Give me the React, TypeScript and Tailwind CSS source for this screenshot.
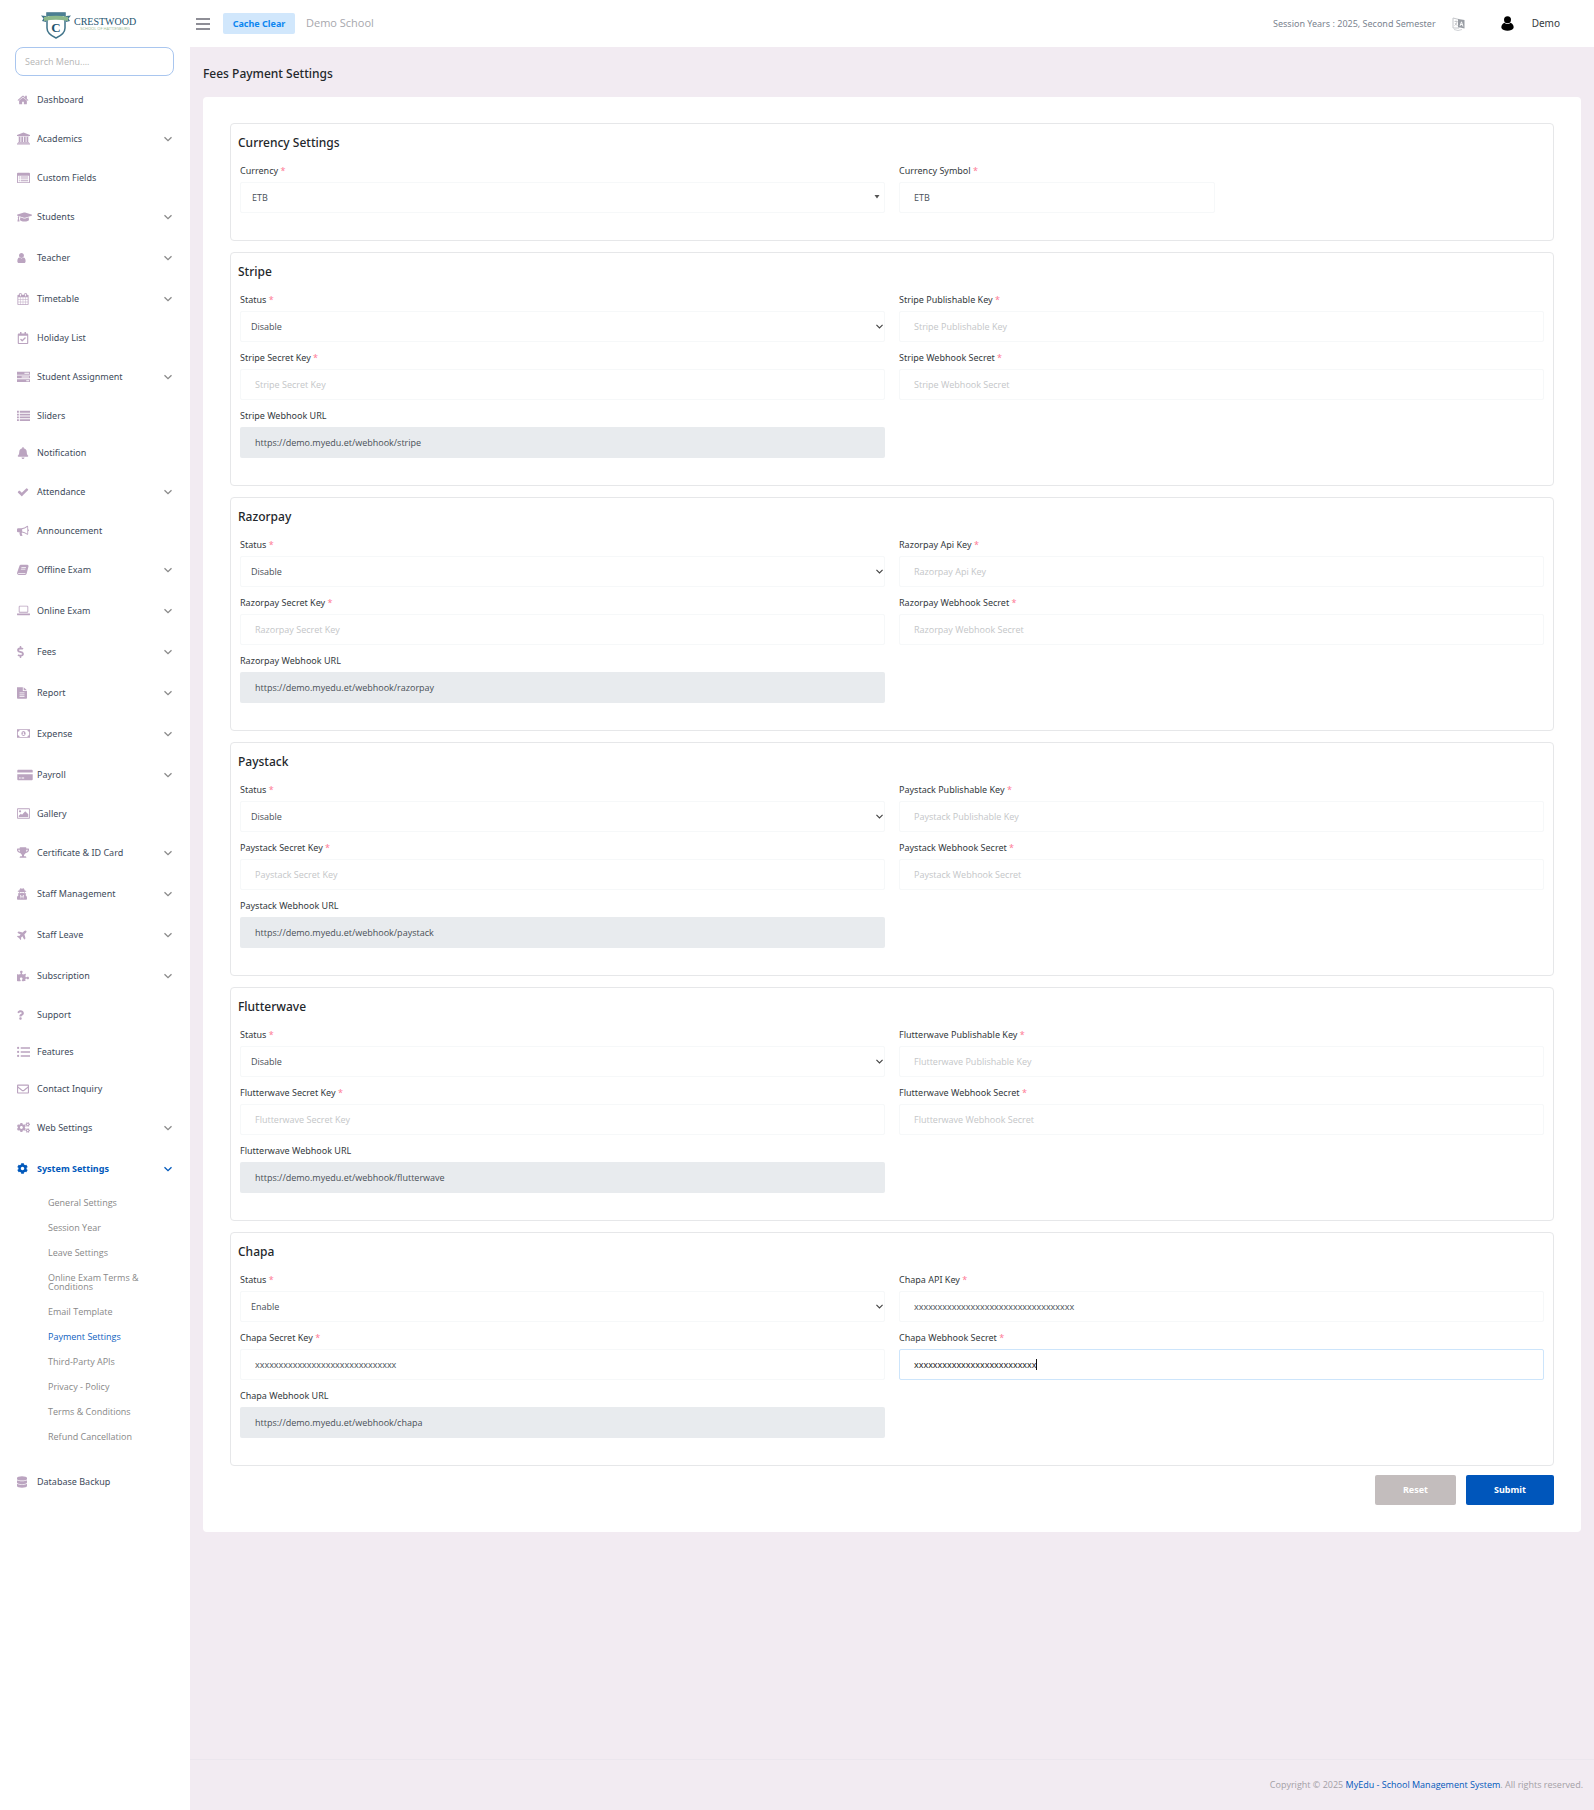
import type { ReactNode } from "react";
import {
  FaBell,
  FaCog,
  FaCogs,
  FaDatabase,
  FaDollarSign,
  FaGraduationCap,
  FaPlane,
  FaPuzzlePiece,
  FaQuestion,
  FaRegCalendarCheck,
  FaRegEnvelope,
  FaTrophy,
  FaUserSecret,
} from "react-icons/fa";

type MenuItem = {
  label: string;
  icon: ReactNode;
  arrow?: boolean;
  active?: boolean;
};

type FieldProps = {
  id: string;
  label: string;
  required?: boolean;
  children: ReactNode;
};

type Gateway = {
  name: string;
  keyLabel: string;
  status: string;
  keyValue?: string;
  secretValue?: string;
  webhookValue?: string;
};

function Glyph({ d, box = "0 0 1792 1792", className = "h-[13px] w-[13px]" }: { d: string; box?: string; className?: string }) {
  return (
    <svg viewBox={box} className={className} fill="currentColor" fillRule="evenodd" aria-hidden="true">
      <path d={d} />
    </svg>
  );
}

const paths = {
  home: "M1472 992v480q0 26-19 45t-45 19h-384v-384h-256v384h-384q-26 0-45-19t-19-45v-480q0-1 .5-3t.5-3l575-474 575 474q1 2 1 6zm223-69l-62 74q-8 9-21 11h-3q-13 0-21-7l-692-577-692 577q-12 8-24 7-13-2-21-11l-62-74q-8-10-7-23.5t11-21.5l719-599q32-26 76-26t76 26l244 204v-195q0-14 9-23t23-9h192q14 0 23 9t9 23v408l219 182q10 8 11 21.5t-7 23.5z",
  university:
    "M832 64l960 384v128h-128q0 26-20.5 45t-48.5 19h-1526q-28 0-48.5-19t-20.5-45h-128v-128zm-704 640h256v768h128v-768h256v768h128v-768h256v768h128v-768h256v768h59q28 0 48.5 19t20.5 45v64h-1664v-64q0-26 20.5-45t48.5-19h59v-768zm1595 960q28 0 48.5 19t20.5 45v128h-1920v-128q0-26 20.5-45t48.5-19h1782z",
  user: "M1536 1399q0 109-62.5 187t-150.5 78h-854q-88 0-150.5-78t-62.5-187q0-85 8.5-160.5t31.5-152 58.5-131 94-89 134.5-34.5q131 128 313 128t313-128q76 0 134.5 34.5t94 89 58.5 131 31.5 152 8.5 160.5zm-256-887q0 159-112.5 271.5t-271.5 112.5-271.5-112.5-112.5-271.5 112.5-271.5 271.5-112.5 271.5 112.5 112.5 271.5z",
  calendar:
    "M192 1664h288v-288h-288v288zm352 0h320v-288h-320v288zm-352-352h288v-320h-288v320zm352 0h320v-320h-320v320zm-352-384h288v-288h-288v288zm736 736h320v-288h-320v288zm-384-736h320v-288h-320v288zm768 736h288v-288h-288v288zm-384-352h320v-320h-320v320zm-352-864v-288q0-13-9.5-22.5t-22.5-9.5h-64q-13 0-22.5 9.5t-9.5 22.5v288q0 13 9.5 22.5t22.5 9.5h64q13 0 22.5-9.5t9.5-22.5zm736 864h288v-320h-288v320zm-384-384h320v-288h-320v288zm384 0h288v-288h-288v288zm32-480v-288q0-13-9.5-22.5t-22.5-9.5h-64q-13 0-22.5 9.5t-9.5 22.5v288q0 13 9.5 22.5t22.5 9.5h64q13 0 22.5-9.5t9.5-22.5zm384-64v1280q0 52-38 90t-90 38h-1408q-52 0-90-38t-38-90v-1280q0-52 38-90t90-38h128v-96q0-66 47-113t113-47h64q66 0 113 47t47 113v96h384v-96q0-66 47-113t113-47h64q66 0 113 47t47 113v96h128q52 0 90 38t38 90z",
  check:
    "M1671 566q0 40-28 68l-724 724-136 136q-28 28-68 28t-68-28l-136-136-362-362q-28-28-28-68t28-68l136-136q28-28 68-28t68 28l294 295 656-657q28-28 68-28t68 28l136 136q28 28 28 68z",
  listAlt:
    "M1 2h12q1 0 1 1v9q0 1-1 1H1q-1 0-1-1V3q0-1 1-1zM1 5v7h12V5zM2 6h1v1H2zM4 6h8v1H4zM2 8h1v1H2zM4 8h8v1H4zM2 10h1v1H2zM4 10h8v1H4z",
  tasks:
    "M0 2h14v3H0zM8 3v1h5V3zM0 6h14v3H0zM5 7v1h8V7zM0 10h14v3H0zM10 11v1h3v-1z",
  list: "M0 2h2v2H0zM3 2h11v2H3zM0 5h2v2H0zM3 5h11v2H3zM0 8h2v2H0zM3 8h11v2H3zM0 11h2v2H0zM3 11h11v2H3z",
  listUl:
    "M1.2 2a1.2 1.2 0 1 1 0 2.4a1.2 1.2 0 0 1 0-2.4zM4 2.5h10v1.5H4zM1.2 6.3a1.2 1.2 0 1 1 0 2.4a1.2 1.2 0 0 1 0-2.4zM4 6.8h10v1.5H4zM1.2 10.6a1.2 1.2 0 1 1 0 2.4a1.2 1.2 0 0 1 0-2.4zM4 11.1h10v1.5H4z",
  bullhorn:
    "M12 1q1 0 1 1v3q1 .3 1 1.200t-1 1.200V10.500q0 1-1 1Q9 9 5.800 8.700Q5 9.500 5.700 10.200Q5.300 11 6.600 12Q5.800 13.300 3.700 12.600Q2.500 10 3 8.600H1.300Q0 8.600 0 7.300V5.200Q0 3.900 1.300 3.900H5Q9 3.900 12 1zM12 2.300Q9 4.700 6 4.900V7.700Q9 8 12 10.200z",
  book: "M4.500 1H12.200q1.600.3 1.200 2L11.200 11.500q-.4 1.300-1.600 1.300H2q-1.400 0-1.800-1.300-.3-1 .1-1.800L2.700 2.500Q3.200 1 4.500 1zM5.300 3.500L5 4.300h5.300l.3-.8zM4.700 5.500l-.3.8h5.300l.3-.8zM1.500 10.500q-.3 1 .6 1.300h7.500l.4-1H2z",
  laptop:
    "M3.200 2h8.600q1.200 0 1.200 1.200v5.600q0 1.200-1.200 1.200H3.200Q2 10 2 8.800V3.200Q2 2 3.200 2zM3 3v6h9V3zM0 11h15v1q0 1-1.200 1H1.200Q0 13 0 12z",
  file: "M0 0h7v4.500h5V13q0 1-1 1H1q-1 0-1-1zM8 0l4 3.600H8zM3 6.500v.9h6v-.9zM3 8.700v.9h6v-.9zM3 10.900v.9h6v-.9z",
  money:
    "M0 2h15v10H0zM3 3q0 2-2 2v4q2 0 2 2h9q0-2 2-2V5q-2 0-2-2zM7.500 4q2.500.3 2.500 3t-2.500 3Q5 9.700 5 7t2.500-3zM7 5.500L6.300 6v.6H7V8h-.7v.7h2.400V8H8V5.500z",
  card: "M0 2q0-1 1-1h16q1 0 1 1v2H0zM0 6h18v6q0 1-1 1H1q-1 0-1-1zM2 10v1h2v-1zM5 10v1h3v-1z",
  image:
    "M1 1h13q1 0 1 1v10q0 1-1 1H1q-1 0-1-1V2q0-1 1-1zM1 2v10h13V2zM3.500 3.200a1.300 1.300 0 1 1 0 2.600a1.300 1.300 0 0 1 0-2.600zM2 9.500l2.500-2.200 1.300 1.200L9.500 4.500l3.500 3.500v3H2z",
};

const small = "0 0 14 14";

const menu: MenuItem[] = [
  { label: "Dashboard", icon: <Glyph d={paths.home} className="h-3 w-3" /> },
  { label: "Academics", icon: <Glyph d={paths.university} box="-128 0 1920 1920" />, arrow: true },
  { label: "Custom Fields", icon: <Glyph d={paths.listAlt} box={small} /> },
  { label: "Students", icon: <FaGraduationCap className="h-3 w-[15px]" />, arrow: true },
  { label: "Teacher", icon: <Glyph d={paths.user} box="200 0 1400 1792" className="h-3 w-[9px]" />, arrow: true },
  { label: "Timetable", icon: <Glyph d={paths.calendar} className="h-3 w-3" />, arrow: true },
  { label: "Holiday List", icon: <FaRegCalendarCheck className="h-3 w-3" /> },
  { label: "Student Assignment", icon: <Glyph d={paths.tasks} box={small} />, arrow: true },
  { label: "Sliders", icon: <Glyph d={paths.list} box={small} /> },
  { label: "Notification", icon: <FaBell className="h-3 w-3" /> },
  { label: "Attendance", icon: <Glyph d={paths.check} className="h-3 w-3" />, arrow: true },
  { label: "Announcement", icon: <Glyph d={paths.bullhorn} box={small} className="h-3 w-3" /> },
  { label: "Offline Exam", icon: <Glyph d={paths.book} box={small} className="h-3 w-3" />, arrow: true },
  { label: "Online Exam", icon: <Glyph d={paths.laptop} box="0 0 15 15" />, arrow: true },
  { label: "Fees", icon: <FaDollarSign className="h-3 w-[7px]" />, arrow: true },
  { label: "Report", icon: <Glyph d={paths.file} box="0 0 12 14" className="h-3 w-[10px]" />, arrow: true },
  { label: "Expense", icon: <Glyph d={paths.money} box="0 0 15 14" />, arrow: true },
  { label: "Payroll", icon: <Glyph d={paths.card} box="0 0 18 14" className="h-3 w-4" />, arrow: true },
  { label: "Gallery", icon: <Glyph d={paths.image} box="0 0 15 14" /> },
  { label: "Certificate & ID Card", icon: <FaTrophy className="h-[11px] w-3" />, arrow: true },
  { label: "Staff Management", icon: <FaUserSecret className="h-3 w-[10px]" />, arrow: true },
  { label: "Staff Leave", icon: <FaPlane className="h-[11px] w-[11px] -rotate-45" />, arrow: true },
  { label: "Subscription", icon: <FaPuzzlePiece className="h-3 w-3" />, arrow: true },
  { label: "Support", icon: <FaQuestion className="h-[10px] w-[7px]" /> },
  { label: "Features", icon: <Glyph d={paths.listUl} box={small} /> },
  { label: "Contact Inquiry", icon: <FaRegEnvelope className="h-3 w-3" /> },
  { label: "Web Settings", icon: <FaCogs className="h-[13px] w-[13px]" />, arrow: true },
  { label: "System Settings", icon: <FaCog className="h-[11px] w-[11px]" />, arrow: true, active: true },
];

const subMenu = [
  "General Settings",
  "Session Year",
  "Leave Settings",
  "Online Exam Terms & Conditions",
  "Email Template",
  "Payment Settings",
  "Third-Party APIs",
  "Privacy - Policy",
  "Terms & Conditions",
  "Refund Cancellation",
];

const gateways: Gateway[] = [
  { name: "Stripe", keyLabel: "Publishable Key", status: "Disable" },
  { name: "Razorpay", keyLabel: "Api Key", status: "Disable" },
  { name: "Paystack", keyLabel: "Publishable Key", status: "Disable" },
  { name: "Flutterwave", keyLabel: "Publishable Key", status: "Disable" },
  {
    name: "Chapa",
    keyLabel: "API Key",
    status: "Enable",
    keyValue: "xxxxxxxxxxxxxxxxxxxxxxxxxxxxxxxxxx",
    secretValue: "xxxxxxxxxxxxxxxxxxxxxxxxxxxxxx",
    webhookValue: "xxxxxxxxxxxxxxxxxxxxxxxxxx",
  },
];

function Chevron({ className }: { className: string }) {
  return (
    <svg viewBox="0 0 8 8" className={className} fill="none" stroke="currentColor" strokeWidth="1.3" aria-hidden="true">
      <path d="M0.500 2.200L4 5.700L7.500 2.200" />
    </svg>
  );
}

function Logo() {
  return (
    <a href="#" className="ml-[41px] flex h-[47px] items-center">
      <svg viewBox="0 0 30 27" className="mt-1 h-[27px] w-[30px]" aria-hidden="true">
        <path d="M6 1H24V16Q24 22 15 26Q6 22 6 16Z" fill="#fff" stroke="#3f7389" strokeWidth="1.500" />
        <path d="M6 1H24V4H6Z" fill="#4b7f93" />
        <path d="M0 3.500L5 4V10L1 9L2.500 6.500ZM30 3.500L25 4V10L29 9L27.500 6.500Z" fill="#3f7389" />
        <path d="M3 5Q15 2.500 27 5V9Q15 6.500 3 9Z" fill="#8db98c" />
        <text x="15" y="20" textAnchor="middle" fontFamily="Liberation Serif, serif" fontSize="13" fontWeight="700" fill="#1d5470">
          C
        </text>
      </svg>
      <span className="ml-[3px] flex flex-col items-center font-['Liberation_Serif',serif]">
        <span className="text-[10px] leading-[10px] text-[#1d5470]">CRESTWOOD</span>
        <span className="font-['Noto_Sans',sans-serif] text-[4px] leading-[4px] text-[#a5c29a]">SCHOOL OF HATTIESBURG</span>
      </span>
    </a>
  );
}

function SidebarItem({ label, icon, arrow, active }: MenuItem) {
  return (
    <li>
      <a
        href="#"
        className={`flex items-center pr-[18px] pl-[17px] ${arrow ? "h-[41px]" : "h-[37px]"} ${
          active ? "font-bold text-[#0058bb]" : "text-[#3e4b5b]"
        }`}
      >
        <span className={`flex w-5 shrink-0 items-center ${active ? "" : "text-[#bba4c0]"}`}>{icon}</span>
        <span className="flex-1">{label}</span>
        {arrow && <Chevron className={`h-2 w-2 ${active ? "text-[#0058bb]" : "text-[#8a8a8a]"}`} />}
      </a>
    </li>
  );
}

function Sidebar() {
  return (
    <aside className="w-[190px] shrink-0 bg-white text-[9px]">
      <Logo />
      <div className="pr-4 pl-[15px]">
        <input
          type="search"
          aria-label="Search Menu"
          placeholder="Search Menu...."
          className="h-[29px] w-full rounded-lg border border-[#a9c6ef] px-[9px] font-['Open_Sans',sans-serif] outline-none placeholder:text-[#b5b5b5]"
        />
      </div>
      <nav className="mt-[5px]">
        <ul>
          {menu.map((item) => (
            <SidebarItem key={item.label} {...item} />
          ))}
        </ul>
        <ul className="mt-px mb-[14px] pr-10 pl-12 font-['Open_Sans',sans-serif]">
          {subMenu.map((item) => (
            <li key={item}>
              <a
                href="#"
                className={`block py-2 leading-[9px] ${item === "Payment Settings" ? "font-medium text-[#0f62bf]" : "text-[#888]"}`}
              >
                {item}
              </a>
            </li>
          ))}
        </ul>
        <ul>
          <SidebarItem label="Database Backup" icon={<FaDatabase className="h-3 w-[10px]" />} />
        </ul>
      </nav>
    </aside>
  );
}

function Header() {
  return (
    <header className="flex h-[47px] items-center bg-white pr-[34px] pl-[6px]">
      <button type="button" aria-label="Toggle menu" className="flex w-[14px] flex-col gap-[3px]">
        <span className="h-[2px] bg-[#8e8e96]" />
        <span className="h-[2px] bg-[#8e8e96]" />
        <span className="h-[2px] bg-[#8e8e96]" />
      </button>
      <button type="button" className="ml-[13px] h-[21px] w-[72px] rounded-xs bg-[#d1e7fc] text-[9px] font-bold text-[#0d86f0]">
        Cache Clear
      </button>
      <span className="ml-[11px] font-['Open_Sans',sans-serif] text-[11px] text-[#a7a7ad]">Demo School</span>
      <span className="ml-auto text-[9px] text-[#7b8490]">Session Years : 2025, Second Semester</span>
      <button type="button" aria-label="Language" className="ml-4">
        <svg viewBox="0 0 13 14" className="h-[14px] w-[13px]" fill="none" aria-hidden="true">
          <path d="M1 1L7 2.500V11H1Z" stroke="#c4c6ca" />
          <path d="M2.500 4.500H5.500M4 3.500V4.500M5.200 4.500Q4.500 7.500 2.500 8.500M3 6Q4 8 5.500 8.500" stroke="#b4b6ba" strokeWidth="0.700" />
          <path d="M6 2L12.500 3V11.500L6 10Z" fill="#989ca3" />
          <path d="M8 9L9.500 4.800L11 9.500M8.500 7.500H10.500" stroke="#fff" strokeWidth="0.900" />
          <path d="M2 12.500Q6 14.500 10 12.500" stroke="#d0d2d6" />
        </svg>
      </button>
      <button type="button" className="ml-9 flex items-center gap-[18px] text-[10px] text-[#343a40]">
        <svg viewBox="0 0 13 15" className="h-[15px] w-[13px]" aria-hidden="true">
          <circle cx="6.500" cy="3.800" r="3.500" fill="#000" />
          <path d="M3.300 6.800Q6.500 9.300 9.700 6.800Q13 8.500 12.600 12Q11 14.800 6.500 14.800T0.400 12Q0 8.500 3.300 6.800Z" fill="#000" />
        </svg>
        Demo
      </button>
    </header>
  );
}

function Field({ id, label, required, children }: FieldProps) {
  return (
    <div>
      <label htmlFor={id} className="mb-[5px] block text-[9px] leading-3 text-[#343a40]">
        {label}
        {required && <span className="text-[#fe7c96]"> *</span>}
      </label>
      {children}
    </div>
  );
}

function TextInput({ id, value, placeholder, focused }: { id: string; value?: string; placeholder?: string; focused?: boolean }) {
  return (
    <div className="relative">
      <input
        id={id}
        type="text"
        defaultValue={value}
        placeholder={placeholder}
        className={`block h-[31px] w-full rounded-xs border px-[14px] font-['Open_Sans',sans-serif] text-[9px] outline-none placeholder:text-[#c4c6c8] ${
          focused ? "border-[#cde5fb] text-[#111]" : "border-[#f6f8f9] text-[#495057]"
        }`}
      />
      {focused && <span className="pointer-events-none absolute top-[10px] left-[137px] h-[11px] w-px bg-[#111]" />}
    </div>
  );
}

function Panel({ title, children }: { title: string; children: ReactNode }) {
  return (
    <fieldset className="rounded-sm border border-[#e6e7e9] px-[9px] pt-[10px] pb-[27px]">
      <h2 className="mb-[13px] -ml-[2px] text-xs leading-[18px] font-medium text-[#23272b]">{title}</h2>
      <div className="grid grid-cols-2 gap-x-[14px] gap-y-[10px]">{children}</div>
    </fieldset>
  );
}

function GatewayPanel({ name, keyLabel, status, keyValue, secretValue, webhookValue }: Gateway) {
  const slug = name.toLowerCase();
  return (
    <Panel title={name}>
      <Field id={`${slug}-status`} label="Status" required>
        <div className="relative">
          <select
            id={`${slug}-status`}
            defaultValue={status}
            className="block h-[31px] w-full appearance-none rounded-xs border border-[#f6f8f9] bg-white px-[10px] font-['Open_Sans',sans-serif] text-[9px] text-[#495057] outline-none"
          >
            <option>Disable</option>
            <option>Enable</option>
          </select>
          <Chevron className="pointer-events-none absolute top-3 right-[2px] h-[7px] w-[7px] text-[#444]" />
        </div>
      </Field>
      <Field id={`${slug}-key`} label={`${name} ${keyLabel}`} required>
        <TextInput id={`${slug}-key`} value={keyValue} placeholder={`${name} ${keyLabel}`} />
      </Field>
      <Field id={`${slug}-secret`} label={`${name} Secret Key`} required>
        <TextInput id={`${slug}-secret`} value={secretValue} placeholder={`${name} Secret Key`} />
      </Field>
      <Field id={`${slug}-webhook`} label={`${name} Webhook Secret`} required>
        <TextInput
          id={`${slug}-webhook`}
          value={webhookValue}
          placeholder={`${name} Webhook Secret`}
          focused={webhookValue !== undefined}
        />
      </Field>
      <Field id={`${slug}-url`} label={`${name} Webhook URL`}>
        <input
          id={`${slug}-url`}
          type="text"
          readOnly
          value={`https://demo.myedu.et/webhook/${slug}`}
          className="block h-[31px] w-full rounded-xs bg-[#e8ebee] px-[15px] font-['Open_Sans',sans-serif] text-[9px] text-[#495057] outline-none"
        />
      </Field>
    </Panel>
  );
}

function PaymentForm() {
  return (
    <form className="rounded bg-white px-[27px] pt-[26px] pb-[27px]">
      <div className="flex flex-col gap-[11px]">
        <Panel title="Currency Settings">
          <Field id="currency" label="Currency" required>
            <div className="relative">
              <select
                id="currency"
                className="block h-[31px] w-full appearance-none rounded-xs border border-[#f6f8f9] bg-white px-[11px] font-['Open_Sans',sans-serif] text-[9px] text-[#495057] outline-none"
              >
                <option>ETB</option>
              </select>
              <svg viewBox="0 0 6 4" className="pointer-events-none absolute top-[13px] right-[5px] h-1 w-[6px]" aria-hidden="true">
                <path d="M0.500 0H5.500L3 3.500Z" fill="#555" />
              </svg>
            </div>
          </Field>
          <Field id="currency-symbol" label="Currency Symbol" required>
            <div className="w-[calc(50%-7px)]">
              <TextInput id="currency-symbol" value="ETB" />
            </div>
          </Field>
        </Panel>
        {gateways.map((gateway) => (
          <GatewayPanel key={gateway.name} {...gateway} />
        ))}
      </div>
      <div className="mt-[9px] flex justify-end gap-[10px] text-[9px] font-bold text-white">
        <button type="reset" className="h-[30px] w-[81px] rounded-xs bg-[#c3bdbd]">
          Reset
        </button>
        <button type="submit" className="h-[30px] w-[88px] rounded-xs bg-[#0056bb]">
          Submit
        </button>
      </div>
    </form>
  );
}

function App() {
  return (
    <div className="flex min-h-screen bg-[#f2ebf2] font-['Noto_Sans',sans-serif]">
      <Sidebar />
      <div className="flex min-w-0 flex-1 flex-col">
        <Header />
        <main className="px-[13px]">
          <h1 className="flex h-[50px] items-center pt-1 text-xs font-medium text-[#23272b]">Fees Payment Settings</h1>
          <PaymentForm />
        </main>
        <footer className="mt-auto border-t border-[#ebe6ee] px-[11px] py-[19px] text-right font-['Open_Sans',sans-serif] text-[9px] leading-3 text-[#a3a0a6]">
          Copyright © 2025{" "}
          <a href="#" className="text-[#0058bb]">
            MyEdu - School Management System
          </a>
          . All rights reserved.
        </footer>
      </div>
    </div>
  );
}

export default App;
